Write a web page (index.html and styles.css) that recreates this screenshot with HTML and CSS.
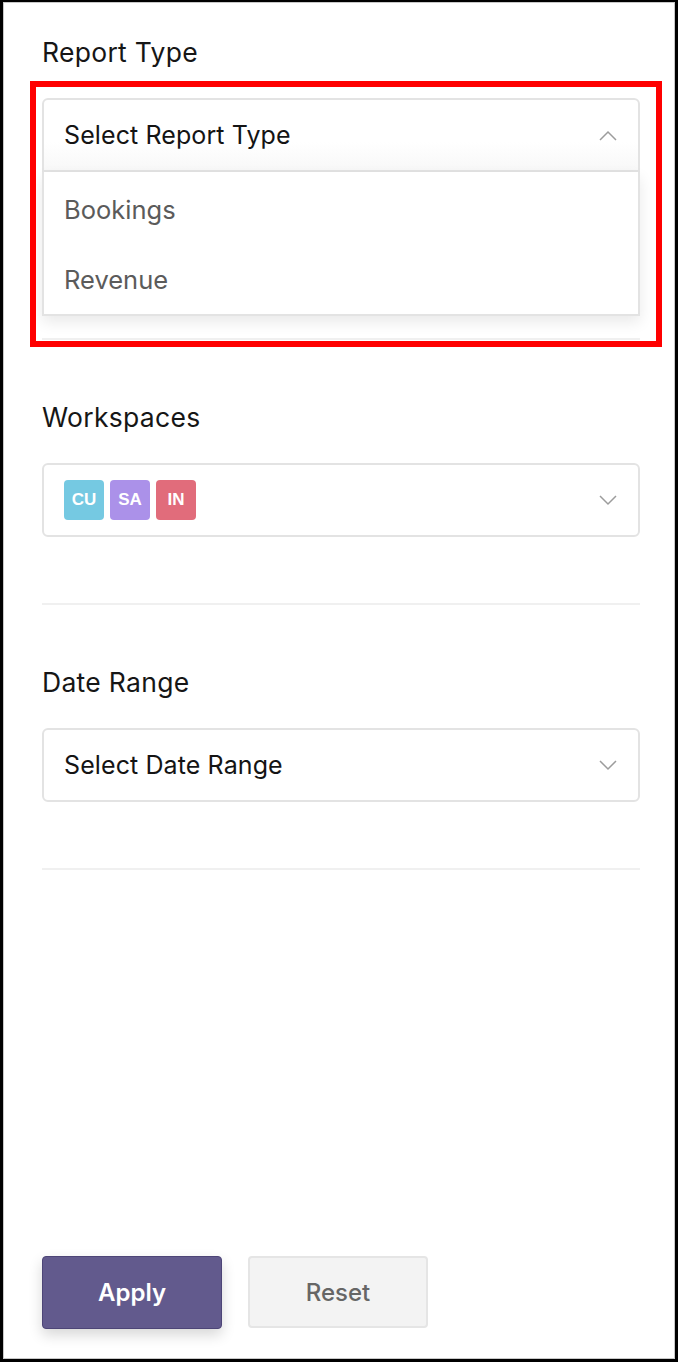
FILE: index.html
```html
<!DOCTYPE html>
<html lang="en">
<head>
<meta charset="utf-8">
<title>Report Filters</title>
<link rel="stylesheet" href="styles.css">
</head>
<body>
<div class="panel">
  <div class="fields">
    <section class="field">
      <div class="label">Report Type</div>
      <div class="dropdown">
        <div class="select is-open">
          <span class="value">Select Report Type</span>
          <svg class="chev" width="18" height="11" viewBox="0 0 18 11"><path d="M1 10 L9 2 L17 10" fill="none" stroke="#9c9c9c" stroke-width="1.5"/></svg>
        </div>
        <ul class="menu">
          <li>Bookings</li>
          <li>Revenue</li>
        </ul>
        <div class="highlight"></div>
      </div>
      <div class="divider divider-first"></div>
    </section>

    <section class="field">
      <div class="label">Workspaces</div>
      <div class="select">
        <span class="badges">
          <span class="badge cu">CU</span>
          <span class="badge sa">SA</span>
          <span class="badge in">IN</span>
        </span>
        <svg class="chev" width="18" height="11" viewBox="0 0 18 11"><path d="M1 1 L9 9 L17 1" fill="none" stroke="#9c9c9c" stroke-width="1.5"/></svg>
      </div>
      <div class="divider"></div>
    </section>

    <section class="field">
      <div class="label">Date Range</div>
      <div class="select">
        <span class="value">Select Date Range</span>
        <svg class="chev" width="18" height="11" viewBox="0 0 18 11"><path d="M1 1 L9 9 L17 1" fill="none" stroke="#9c9c9c" stroke-width="1.5"/></svg>
      </div>
      <div class="divider"></div>
    </section>
  </div>

  <div class="actions">
    <button class="btn btn-apply">Apply</button>
    <button class="btn btn-reset">Reset</button>
  </div>
</div>
</body>
</html>
```

FILE: styles.css
```css
* { box-sizing: border-box; }

html, body {
  margin: 0;
  padding: 0;
  background: #fff;
}

body {
  font-family: Inter, "Noto Sans", sans-serif;
  color: #151515;
}

.panel {
  height: 1362px;
  border-style: solid;
  border-color: #000;
  border-width: 2px 3px 3px 3px;
  box-shadow: inset 0 0 0 1px #c8c8c8;
  display: flex;
  flex-direction: column;
  padding: 35px 35px 30px 39px;
}

.fields {
  display: flex;
  flex-direction: column;
}

.field + .field {
  margin-top: 62px;
}

.label {
  font-size: 26.5px;
  line-height: 30px;
  font-weight: 400;
  letter-spacing: 0.3px;
  color: #161616;
  margin-bottom: 31px;
}

.dropdown {
  position: relative;
}

.select {
  height: 74px;
  border: 2px solid #e3e3e3;
  border-radius: 6px;
  padding: 0 20px 0 20px;
  display: flex;
  align-items: center;
  justify-content: space-between;
  background: #fff;
}

.select.is-open {
  border-radius: 6px 6px 0 0;
  background: linear-gradient(#ffffff 60%, #f8f8f8);
}

.value {
  font-size: 25px;
  color: #141414;
  letter-spacing: 0.1px;
}

.chev {
  display: block;
  margin-right: 1px;
}

.menu {
  list-style: none;
  margin: 0;
  padding: 2px 0 0 0;
  border: 2px solid #e3e3e3;
  border-top: 0;
  background: #fff;
  box-shadow: 0 6px 14px rgba(0, 0, 0, 0.09);
}

.menu li {
  height: 70px;
  display: flex;
  align-items: center;
  padding-left: 20px;
  font-size: 25.5px;
  color: #5b5b5b;
}

.highlight {
  position: absolute;
  top: -17px;
  left: -12px;
  right: -22px;
  bottom: -31px;
  border: 6px solid #ff0000;
  pointer-events: none;
}

.divider {
  height: 2px;
  background: #f0f0f0;
  margin-top: 66px;
}

.divider-first {
  margin-top: 22px;
}

.badges {
  display: flex;
  gap: 6px;
}

.badge {
  width: 40px;
  height: 40px;
  border-radius: 4px;
  display: flex;
  align-items: center;
  justify-content: center;
  font-family: "Liberation Sans", Arial, sans-serif;
  font-weight: 700;
  font-size: 17px;
  color: #fff;
}

.badge.cu { background: #75c9e2; }
.badge.sa { background: #ab91e9; }
.badge.in { background: #e16c7b; }

.actions {
  margin-top: auto;
  display: flex;
  align-items: flex-start;
  gap: 26px;
}

.btn {
  width: 180px;
  font-family: Inter, "Noto Sans", sans-serif;
  font-size: 24px;
  border-radius: 4px;
  cursor: pointer;
}

.btn-apply {
  height: 73px;
  background: #625a8d;
  border: 1px solid #4d4577;
  color: #fff;
  font-weight: 600;
  box-shadow: 0 6px 14px rgba(0, 0, 0, 0.16);
}

.btn-reset {
  height: 72px;
  background: #f3f3f3;
  border: 2px solid #e5e5e5;
  color: #666;
  font-weight: 500;
}
```
